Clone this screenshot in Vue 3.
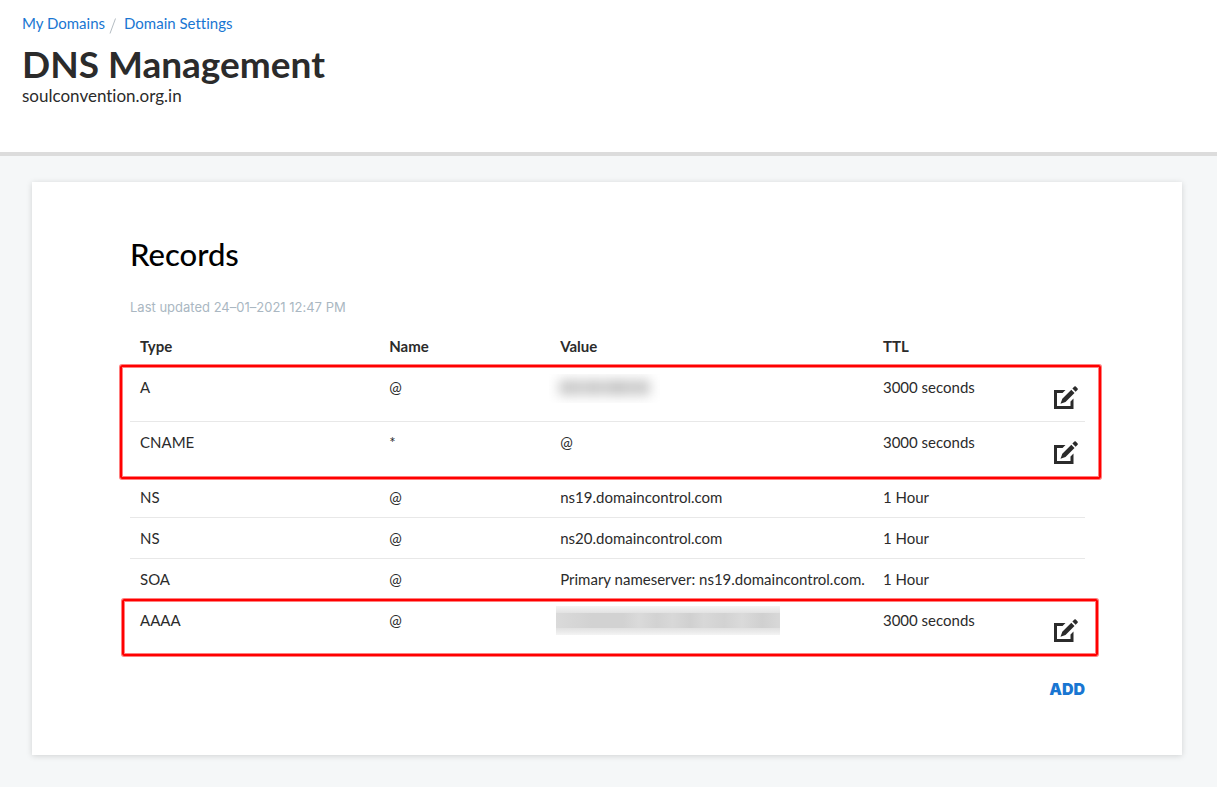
<script setup>
const groups = [
  {
    mark: 'mark-wide',
    rows: [
      { type: 'A', name: '@', blur: 'blur-short', ttl: '3000 seconds', edit: true },
      { type: 'CNAME', name: '*', value: '@', ttl: '3000 seconds', edit: true },
    ],
  },
  {
    mark: '',
    rows: [
      { type: 'NS', name: '@', value: 'ns19.domaincontrol.com', ttl: '1 Hour' },
      { type: 'NS', name: '@', value: 'ns20.domaincontrol.com', ttl: '1 Hour' },
      { type: 'SOA', name: '@', value: 'Primary nameserver: ns19.domaincontrol.com.', ttl: '1 Hour' },
    ],
  },
  {
    mark: 'mark-narrow',
    rows: [{ type: 'AAAA', name: '@', blur: 'blur-long', ttl: '3000 seconds', edit: true }],
  },
]
</script>

<template>
  <div class="page">
    <header class="top">
      <nav class="crumbs">
        <a href="#">My Domains</a>
        <svg class="slash" viewBox="0 0 8 16" aria-hidden="true"><path d="M1 15.500L6.500 .5" /></svg>
        <a href="#">Domain Settings</a>
      </nav>
      <h1>DNS Management</h1>
      <p class="domain">soulconvention.org.in</p>
    </header>
    <main class="card">
      <h2>Records</h2>
      <p class="updated">Last updated 24–01–2021 12:47 PM</p>
      <table>
        <colgroup>
          <col class="c-type" /><col class="c-name" /><col class="c-value" /><col class="c-ttl" /><col />
        </colgroup>
        <thead>
          <tr><th>Type</th><th>Name</th><th>Value</th><th>TTL</th><td></td></tr>
        </thead>
        <tbody v-for="(g, i) in groups" :key="i" :class="g.mark">
          <tr v-for="(r, j) in g.rows" :key="j">
            <td>{{ r.type }}</td>
            <td>{{ r.name }}</td>
            <td><span v-if="r.blur" class="blur" :class="r.blur"><i></i></span><template v-else>{{ r.value }}</template></td>
            <td>{{ r.ttl }}</td>
            <td class="action">
              <button v-if="r.edit" type="button" class="edit" aria-label="Edit record">
                <svg viewBox="0 0 24 24" aria-hidden="true">
                  <path d="M11.500 4H0V23H19.500V12.500L16.500 15.500V20H3V7H8.500Z" />
                  <path d="M8.300 12.700L17.300 3.700L20.500 6.900L11.500 15.900L6.500 17.700Z" />
                  <path d="M18.400 2.600L20.400 .6Q21.100 0 21.800 .6L23.600 2.400Q24.200 3.100 23.600 3.800L21.600 5.800Z" />
                </svg>
              </button>
            </td>
          </tr>
        </tbody>
      </table>
      <div class="foot"><button type="button" class="add">ADD</button></div>
    </main>
  </div>
</template>

<style>
body {
  margin: 0;
  background: #f5f7f8;
}
</style>

<style scoped>
.page {
  min-height: 100vh;
  font-family: Lato, Roboto, "Liberation Sans", sans-serif;
  font-size: 15px;
  line-height: 20px;
  font-variant-ligatures: none;
  color: #2b2b2b;
}
.top {
  background: #fff;
  border-bottom: 4px solid #dcdcdc;
  padding: 12px 22px 46px;
}
.crumbs {
  display: flex;
  align-items: center;
}
.crumbs a {
  color: #1976d2;
  text-decoration: none;
}
.slash {
  width: 8px;
  height: 16px;
  margin: 6px 7px 0 4px;
  fill: none;
  stroke: #b4bcc2;
}
h1 {
  margin: 10px 0 0;
  font-size: 37px;
  line-height: 40px;
  font-weight: 700;
}
.domain {
  margin: 2px 0 0;
  font-size: 17px;
}
.card {
  margin: 26px 35px 32px 32px;
  padding: 54px 97px 56px 98px;
  background: #fff;
  box-shadow: 0 1px 6px rgba(0, 0, 0, 0.15);
}
h2 {
  margin: 0;
  font-size: 31px;
  line-height: 36px;
  font-weight: 500;
  color: #000;
}
.updated {
  margin: 25px 0 9px;
  font-family: Inter, "Liberation Sans", sans-serif;
  font-size: 13px;
  color: #aab7c2;
}
table {
  width: 100%;
  table-layout: fixed;
  border-collapse: separate;
  border-spacing: 0;
}
.c-type { width: 26.1%; }
.c-name { width: 17.9%; }
.c-value { width: 33.8%; }
.c-ttl { width: 14%; }
th, td {
  padding: 10px;
  border-bottom: 1px solid #e8e8e8;
  text-align: left;
  vertical-align: top;
  white-space: nowrap;
}
th { font-weight: 700; }
thead th, thead td, tbody tr:last-child td { border-bottom-color: transparent; }
tbody { position: relative; }
.mark-wide::after, .mark-narrow::after {
  content: "";
  position: absolute;
  border: 2px solid #f00;
  border-radius: 2px;
  box-shadow: 0 0 0 1px rgba(255, 0, 0, 0.5), inset 0 0 0 1px rgba(255, 0, 0, 0.5);
  pointer-events: none;
}
.mark-wide::after { inset: -2px -16px -2px -10px; }
.mark-narrow::after { inset: -1px -13px -1px -8px; }
.action { padding-right: 7px; }
.edit {
  display: block;
  margin: 9px 0 1px auto;
  padding: 0;
  border: 0;
  background: none;
  color: inherit;
  cursor: pointer;
}
.edit svg {
  display: block;
  width: 24px;
  height: 24px;
  fill: currentColor;
}
.blur {
  display: block;
  overflow: hidden;
  height: 29px;
}
.blur i { display: block; }
.blur-short {
  width: 111px;
  margin: -3px 0 -6px -11px;
}
.blur-short i {
  height: 15px;
  margin: 6px 10px;
  background: linear-gradient(90deg, #c8c8c8 22%, #d8d8d8 26%, #c8c8c8 30% 46%, #d8d8d8 51%, #c4c4c4 55% 75%, #d8d8d8 78%, #c8c8c8 82%);
  filter: blur(6px);
}
.blur-long {
  width: 224px;
  margin: -4px 0 -5px -4px;
  background: linear-gradient(#f4f4f4, #e2e2e2 24%, #e2e2e2 78%, #f4f4f4);
}
.blur-long i {
  height: 15px;
  margin: 7px 0;
  background: linear-gradient(90deg, #dadada, #d2d2d2 16% 30%, #dadada 37%, #d2d2d2 45%, #d8d8d8 52%, #d0d0d0 60%, #d8d8d8 66%, #d2d2d2 75%, #dadada 83%, #d0d0d0 92%, #d8d8d8);
}
.foot {
  display: flex;
  justify-content: flex-end;
  margin-top: 24px;
}
.add {
  padding: 0;
  border: 0;
  background: none;
  font: 900 16px/20px Inter, "Liberation Sans", sans-serif;
  color: #1976d2;
  cursor: pointer;
}
</style>
